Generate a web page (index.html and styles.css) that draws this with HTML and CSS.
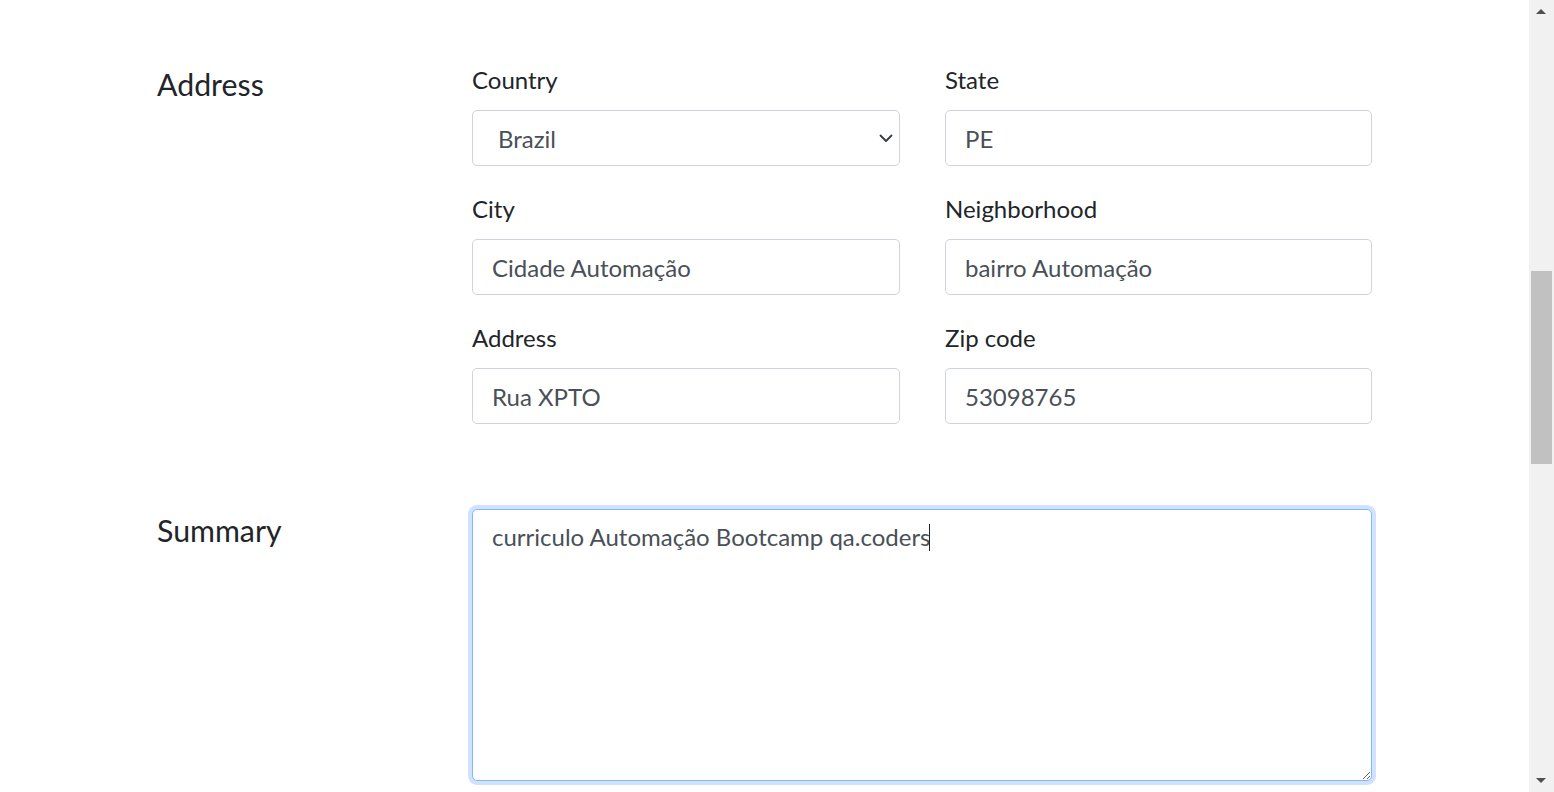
FILE: index.html
```html
<!DOCTYPE html>
<html lang="en">
<head>
<meta charset="utf-8">
<title>Resume form</title>
<link rel="stylesheet" href="styles.css">
</head>
<body>
<div class="page">
  <main class="form">
    <section class="section address">
      <h2 class="section-title">Address</h2>
      <div class="fields">
        <div class="field">
          <label class="label" for="country">Country</label>
          <div class="select-wrap">
            <select id="country" class="control select">
              <option>Brazil</option>
            </select>
            <svg class="chevron" viewBox="0 0 16 16" width="16" height="16" aria-hidden="true"><path d="M2.5 5.5l5.5 5.5 5.5-5.5" fill="none" stroke="#343a40" stroke-width="1.8" stroke-linecap="round" stroke-linejoin="round"/></svg>
          </div>
        </div>
        <div class="field">
          <label class="label" for="state">State</label>
          <input id="state" class="control" type="text" value="PE">
        </div>
        <div class="field">
          <label class="label" for="city">City</label>
          <input id="city" class="control" type="text" value="Cidade Automação">
        </div>
        <div class="field">
          <label class="label" for="hood">Neighborhood</label>
          <input id="hood" class="control" type="text" value="bairro Automação">
        </div>
        <div class="field">
          <label class="label" for="addr">Address</label>
          <input id="addr" class="control" type="text" value="Rua XPTO">
        </div>
        <div class="field">
          <label class="label" for="zip">Zip code</label>
          <input id="zip" class="control" type="text" value="53098765">
        </div>
      </div>
    </section>
    <section class="section summary">
      <h2 class="section-title">Summary</h2>
      <div class="summary-box">
        <textarea class="control textarea focused">curriculo Automação Bootcamp qa.coders</textarea>
        <span class="caret"></span>
      </div>
    </section>
  </main>
  <div class="scrollbar" aria-hidden="true">
    <span class="arrow up"></span>
    <span class="thumb"></span>
    <span class="arrow down"></span>
  </div>
</div>
</body>
</html>
```

FILE: styles.css
```css
html, body {
  margin: 0;
  padding: 0;
  height: 100%;
  overflow: hidden;
  background: #ffffff;
}
body {
  font-family: Lato, "Open Sans", "Liberation Sans", sans-serif;
  color: #212529;
}
.page {
  width: 1529px;
  height: 792px;
  position: relative;
}
.form {
  width: 1215px;
  margin-left: 157px;
  padding-top: 62px;
}
.section {
  display: grid;
  grid-template-columns: 315px 900px;
}
.section-title {
  margin: 4px 0 0;
  font-size: 30.3px;
  font-weight: 400;
  line-height: 1.2;
  color: #212529;
}
.summary .section-title {
  margin-top: 3px;
}
.fields {
  display: grid;
  grid-template-columns: 428px 427px;
  column-gap: 45px;
  row-gap: 25px;
}
.field {
  display: flex;
  flex-direction: column;
}
.label {
  font-size: 24px;
  line-height: 36px;
  margin-bottom: 12px;
  color: #212529;
}
.control {
  box-sizing: border-box;
  width: 100%;
  height: 56px;
  margin: 0;
  padding: 0 19px;
  border: 1px solid #ced4da;
  border-radius: 5px;
  background: #ffffff;
  font-family: Lato, "Open Sans", "Liberation Sans", sans-serif;
  font-size: 24px;
  color: #495057;
  outline: none;
}
.select-wrap {
  position: relative;
}
.select {
  -webkit-appearance: none;
  appearance: none;
  padding-left: 25px;
}
.chevron {
  position: absolute;
  right: 6px;
  top: 20px;
  pointer-events: none;
}
.summary {
  margin-top: 85px;
}
.summary-box {
  position: relative;
}
.textarea {
  display: block;
  height: 272px;
  padding: 12px 19px;
  line-height: 30px;
  resize: vertical;
}
.textarea.focused {
  border-color: #86b7fe;
  box-shadow: 0 0 0 4px #cfe2ff;
}
.caret {
  position: absolute;
  left: 457px;
  top: 15px;
  width: 1px;
  height: 27px;
  background: #212529;
}
.scrollbar {
  position: absolute;
  top: 0;
  right: -25px;
  width: 25px;
  height: 792px;
  background: #f1f1f1;
}
.thumb {
  position: absolute;
  left: 2px;
  top: 271px;
  width: 21px;
  height: 193px;
  background: #c1c1c1;
}
.arrow {
  position: absolute;
  left: 7px;
  width: 0;
  height: 0;
  border-left: 5px solid transparent;
  border-right: 5px solid transparent;
}
.arrow.up {
  top: 9px;
  border-bottom: 5px solid #505050;
}
.arrow.down {
  bottom: 9px;
  border-top: 5px solid #505050;
}
```
